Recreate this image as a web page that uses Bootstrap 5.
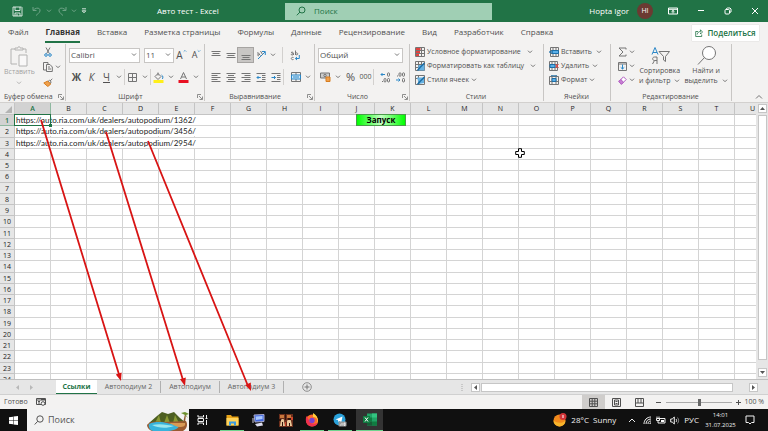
<!DOCTYPE html>
<html lang="ru">
<head>
<meta charset="utf-8">
<meta name="viewport" content="width=device-width, initial-scale=1">
<title>Авто тест - Excel</title>
<link href="https://cdn.jsdelivr.net/npm/bootstrap@5.3.0/dist/css/bootstrap.min.css" rel="stylesheet">
<style>
:root{--xl:#217346;--ink:#505050;--rib:#f3f2f1;--line:#d4d4d4}
body{font-family:"Open Sans","Noto Sans",sans-serif;font-size:7px;line-height:10px;color:var(--ink);background:var(--rib)}
svg{display:block;flex:none;fill:none;stroke:currentColor}
button,select,input{font:inherit;color:inherit}
.tb{border:0;background:none;padding:0;display:flex;align-items:center;justify-content:center;flex:none;white-space:nowrap}
.w10{width:10px}.w12{width:12px}.w15{width:15px}.h14{height:14px}.h16{height:16px}.w27{width:27px}.w28{width:28px}
/* title bar */
.titlebar{height:22px;background:var(--xl);color:#fff;font-size:8px}
.quick{width:157px;padding-left:10px}
.dim{opacity:.35}
.doc{width:128px}
.find{width:207px;height:17px;background:#a0cfb4;color:var(--xl);padding-left:11px}
.find input,.search input{border:0;background:none;outline:0;padding:0;width:100%;min-width:0}
.find input::placeholder{color:var(--xl);opacity:1}
.avatar{width:16px;height:16px;background:#6b3a32;font-size:7px;margin-right:6px}
/* ribbon tabs */
.menu{height:21px;font-size:8px;padding:0 9px 0 8px}
.menu-links{gap:17px}
.menu a{color:var(--ink);text-decoration:none;padding:4px 0 3px;line-height:12px;border-bottom:2px solid transparent;white-space:nowrap}
.menu a.on{font-weight:700;color:#333;border-color:var(--xl)}
.share{height:16px;background:#fff;color:var(--xl);font-weight:600;width:67px;box-shadow:0 0 1px #bbb}
/* ribbon */
.ribbon{height:60px;border-bottom:1px solid #d2d0ce}
.ribbon svg{color:#757575}
.grp{position:relative;flex:none;height:59px}
.grp+.grp::before{content:"";position:absolute;left:0;top:1px;bottom:1px;width:1px;background:#c8c6c4}
.gbody{height:49px;padding-top:2px}
.cap{line-height:10px;height:10px}
.launch{position:absolute;right:1px;bottom:1px}
.g1{width:65px}.g2{width:139px}.g3{width:110px}.g4{width:95px}.g5{width:134px}.g6{width:67px}.g7{width:121px}
.two{display:flex;flex-direction:column;gap:6px;padding-top:4px}
.r16{display:flex;height:16px;align-items:center}
.three{display:flex;flex-direction:column}
.lead6{padding-left:6px}
.combo{appearance:none;border:1px solid #c8c6c4;background:#fff url("data:image/svg+xml,%3Csvg xmlns='http://www.w3.org/2000/svg' width='6' height='4'%3E%3Cpath d='M1 .5L3 2.5L5 .5' fill='none' stroke='%23777'/%3E%3C/svg%3E") no-repeat right 2px center;height:15px;padding:0 1px;border-radius:0;font-size:8px}
.c1{width:71px}.c2{width:30px}.c3{width:85px}
.vr1{width:1px;height:16px;background:#d2d0ce;flex:none}
.picked{background:#c8c6c4;outline:1px solid #a6a4a2;height:14px}
.big{flex-direction:column;justify-content:flex-start;line-height:10px}
.cmd{height:14px;justify-content:flex-start;gap:2px}
.font9{font-size:9px}.font10{font-size:10px}.font11{font-size:11px}
/* sheet */
.work{min-height:0}
.sheet{flex:1 1 0;min-height:0;overflow:hidden}
.cells{flex:1 1 0;min-width:0;overflow:hidden;background:#fff;position:relative}
.book{display:grid;grid-template-rows:12px 270px;line-height:10px;color:#222;width:771px}
.book thead,.book tbody,.book tr{display:grid;min-height:0}
.book tbody{grid-template-rows:repeat(24,minmax(0,1fr))}
.book tr{grid-template-columns:15px repeat(21,36px)}
.book th{background:#e6e6e6;font-weight:400;font-size:7px;text-align:center;border-right:1px solid #c4c4c4;border-bottom:1px solid #c4c4c4;padding:0;min-height:0;overflow:hidden;line-height:11px}
.book td{border-right:1px solid var(--line);border-bottom:1px solid var(--line);padding:0;min-height:0;min-width:0;white-space:nowrap;font-family:Lato,"Open Sans",sans-serif;font-size:8px}
.book th.sel{background:#d2d2d2;color:var(--xl);font-weight:600;border-color:#8fb8a0}
.book td span{position:relative;display:block;width:max-content;background:#fff;height:10px;line-height:10px;padding-left:1px}
.corner{display:block;width:0;height:0;margin:3px 2px 0 5px;border-left:7px solid transparent;border-bottom:7px solid #b4b4b4}
.cursorbox{position:absolute;left:14px;top:11px;width:37px;height:12px;border:1px solid var(--xl)}
.cursorbox::after{content:"";position:absolute;right:-2px;bottom:-2px;width:3px;height:3px;background:var(--xl)}
.run{position:absolute;left:356px;top:11px;width:50px;height:12px;border:1px solid #4a9a4a;padding:0;background:linear-gradient(90deg,#0f0,#c4ffc4 50%,#0f0);color:#000;font-weight:700;font-size:8px;line-height:10px;text-align:center}
.pointer{position:absolute;left:515px;top:45px}
.arrows{position:absolute;left:0;top:0;pointer-events:none;z-index:2}
.vscroll{width:12px;background:#e6e6e6;padding:1px 1px 2px}
.knob{background:#fff;border:1px solid #c6c6c6;width:9px;height:9px;flex:none}
.vthumb{width:9px;flex:1;background:#fff;border:1px solid #c6c6c6;margin:2px 0 8px}
.sheets{height:15px;background:#e6e6e6;border-top:1px solid #c0c0c0}
.sheets a{color:#666;text-decoration:none;line-height:12px;height:12px;margin-top:1px;border-right:1px solid #b0b0b0;text-align:center;white-space:nowrap}
.sheets a.on{background:#fff;color:var(--xl);font-weight:700;border-right:0;border-bottom:1px solid var(--xl);height:14px;line-height:13px;margin-top:0;width:41px}
.s2{width:64px}.s3{width:59px}.s4{width:64px}
.newsheet{margin-left:18px;color:#777}
.navs{width:56px;color:#b4b4b4;padding-left:15px;gap:11px}
.hscroll{width:289px;padding-right:2px}
.hthumb{flex:1;height:9px;background:#fff;border:1px solid #c6c6c6;margin-left:1px;margin-right:16px}
.status{height:15px;border-top:1px solid #d0d0d0;padding-left:4px}
.view{width:23px;height:14px}
.view.on{background:#cfcdcb}
.zoom{appearance:none;width:66px;height:8px;background:linear-gradient(#aaa,#aaa) center/100% 1px no-repeat}
.zoom::-webkit-slider-thumb{appearance:none;width:3px;height:7px;background:#666}
/* taskbar */
.taskbar{height:22px;background:#101010;color:#f0f0f0;font-size:8px}
.search{width:162px;background:#f2f2f2;color:#555;padding-left:7px}
.search input::placeholder{color:#555;opacity:1}
.island{stroke:none}
.app{width:24px;height:22px;padding-bottom:1px}
.open{box-shadow:inset 0 -1px #6fd58f}
.cur{background:#333;width:27px}
.clock{font-size:6px;line-height:10px;width:35px}
.note{width:23px;margin-right:7px}
</style>
</head>
<body class="d-flex flex-column vh-100 overflow-hidden">
<svg width="0" height="0" class="position-absolute" aria-hidden="true">
  <symbol id="chev" viewBox="0 0 6 4"><path d="M1 .7 3 2.7 5 .7"/></symbol>
  <symbol id="launch" viewBox="0 0 6 6"><path d="M.5 4V.5H4M2 2l3 3M5.5 2.500V5.500H2.500" stroke-width=".8"/></symbol>
</svg>

<header class="titlebar d-flex align-items-center">
  <div class="quick d-flex align-items-center">
    <button class="tb w15" aria-label="Сохранить"><svg width="11" height="11" viewBox="0 0 11 11"><path d="M1 1h8.500l.5.5V10H1zM3 1v3.500h5V1M3 10V7h5v3M5 8v2" stroke-width=".8"/></svg></button>
    <button class="tb w15 dim ms-1" aria-label="Отменить"><svg width="10" height="10" viewBox="0 0 10 10"><path d="M1 1v3.500h3.500M1 4.500C4 1 8.500 1.500 8 5 7.500 7 5.500 8 4 9.500"/></svg></button>
    <button class="tb w10 dim" aria-label="Список отмены"><svg width="6" height="4"><use href="#chev"/></svg></button>
    <button class="tb w15 dim" aria-label="Повторить"><svg width="10" height="10" viewBox="0 0 10 10"><path d="M9 1v3.500H5.500M9 4.500C6 1 1.500 1.500 2 5 2.500 7 4.500 8 6 9.500"/></svg></button>
    <button class="tb w10 dim" aria-label="Список повтора"><svg width="6" height="4"><use href="#chev"/></svg></button>
    <button class="tb w10" aria-label="Настройка панели"><svg width="6" height="6" viewBox="0 0 6 6"><path d="M1 .8h4M1.200 2.800h3.600L3 4.800z" stroke-width=".8"/></svg></button>
  </div>
  <div class="doc text-nowrap">Авто тест - Excel</div>
  <label class="find d-flex align-items-center gap-2"><svg width="10" height="10" viewBox="0 0 10 10"><circle cx="6" cy="4" r="3"/><path d="M4 6 .8 9.300"/></svg><input type="text" placeholder="Поиск" aria-label="Поиск"></label>
  <div class="ms-auto d-flex align-items-center">
    <span class="me-2 text-nowrap">Hopta Igor</span>
    <span class="avatar rounded-circle d-flex align-items-center justify-content-center">HI</span>
    <button class="tb w28" aria-label="Параметры ленты"><svg width="10" height="8" viewBox="0 0 10 8"><path d="M.5 1h9v6h-9zM.5 2.300h9M5 6.500V3.500M3.500 4.800 5 3.400l1.500 1.400"/></svg></button>
    <button class="tb w27" aria-label="Свернуть"><svg width="8" height="8" viewBox="0 0 8 8"><path d="M1 3.500h6"/></svg></button>
    <button class="tb w27" aria-label="Восстановить"><svg width="8" height="8" viewBox="0 0 8 8"><rect x="1" y="2.500" width="4.500" height="4.500" rx="1"/><path d="M2.500 2.500V1.500l1-.5H6l1 1v3l-1.500.5"/></svg></button>
    <button class="tb w27" aria-label="Закрыть"><svg width="8" height="8" viewBox="0 0 8 8"><path d="m1 1 6 6M7 1 1 7"/></svg></button>
  </div>
</header>

<nav class="menu d-flex align-items-center">
  <div class="menu-links d-flex">
    <a href="#">Файл</a><a href="#" class="on">Главная</a><a href="#">Вставка</a><a href="#">Разметка страницы</a><a href="#">Формулы</a><a href="#">Данные</a><a href="#">Рецензирование</a><a href="#">Вид</a><a href="#">Разработчик</a><a href="#">Справка</a>
  </div>
  <button class="tb share ms-auto gap-1"><svg width="8" height="8" viewBox="0 0 8 8"><path d="M3 2.500H.7v5h6V5.500M2.200 5.500c.3-2 1.500-3 3.300-3V.8l2 2.200-2 2V3.700"  stroke-width=".8"/></svg>Поделиться</button>
</nav>

<section class="ribbon d-flex" aria-label="Главная">
  <div class="grp g1">
    <div class="gbody d-flex">
      <button class="tb big w-auto ps-1 opacity-50" aria-label="Вставить">
        <svg width="20" height="22" viewBox="0 0 20 22"><path d="M8 19H2V4h4M14 4h3v4M6 5V3h3c0-2 2-2 2 0h3v2z"/><path d="M10 10h8v11h-8z" fill="#fff"/></svg>
        <span>Вставить</span><svg width="6" height="4" class="mt-1"><use href="#chev"/></svg></button>
      <div class="three ps-1 ms-1">
        <button class="tb w10 h14" aria-label="Вырезать"><svg width="8" height="10" viewBox="0 0 8 10"><path d="M2 .5 5.300 6.500M6 .5 2.700 6.500"/><g stroke="#2b88c8"><circle cx="2" cy="8" r="1.300"/><circle cx="6" cy="8" r="1.300"/></g></svg></button>
        <div class="d-flex"><button class="tb w10 h16" aria-label="Копировать"><svg width="10" height="10" viewBox="0 0 10 10"><path d="M3 8H.5V.5H5V2M3.500 2.500H7L9.300 5v4.500H3.500zM5 5h2M5 7h3"/></svg></button><button class="tb w10" aria-label="Параметры копирования"><svg width="6" height="4"><use href="#chev"/></svg></button></div>
        <button class="tb w10 h14" aria-label="Формат по образцу"><svg width="10" height="9" viewBox="0 0 10 9"><path d="m.8 5 4-2 3 3-3 2.500z" fill="#f0a04b" stroke="#d67d20"/><path d="m5 3.500 1.500-1.200 1.700 1.500-1 1.700M7 3 9.300.8"/></svg></button>
      </div>
    </div>
    <div class="cap ps-1">Буфер обмена</div><button class="tb launch" aria-label="Буфер обмена, параметры"><svg width="6" height="8"><use href="#launch"/></svg></button>
  </div>

  <div class="grp g2">
    <div class="gbody two ps-1">
      <div class="r16">
        <select class="combo c1 me-1" aria-label="Шрифт"><option>Calibri</option></select>
        <select class="combo c2" aria-label="Размер"><option>11</option></select>
        <button class="tb w15 font10" aria-label="Увеличить шрифт">A<svg width="4" height="4" viewBox="0 0 6 4" class="mb-2"><path d="m1 3 2-2 2 2" stroke="#2b88c8"/></svg></button>
        <button class="tb w15 font9" aria-label="Уменьшить шрифт">A<svg width="4" height="4" class="mb-2" viewBox="0 0 6 4"><path d="m1 1 2 2 2-2" stroke="#2b88c8"/></svg></button>
      </div>
      <div class="r16">
        <button class="tb w15 font10 fw-bold" aria-label="Полужирный">Ж</button><button class="tb w15 font10 fst-italic" aria-label="Курсив">К</button><button class="tb w15 font10 text-decoration-underline" aria-label="Подчеркнутый">Ч</button><button class="tb w10" aria-label="Подчеркивание"><svg width="6" height="4"><use href="#chev"/></svg></button><i class="vr1"></i>
        <button class="tb w15" aria-label="Границы"><svg width="9" height="9" viewBox="0 0 9 9"><path d="M.5.5h8v8h-8zM4.500.5v8M.5 4.500h8"/></svg></button><button class="tb w10" aria-label="Список границ"><svg width="6" height="4"><use href="#chev"/></svg></button><i class="vr1"></i>
        <button class="tb w15" aria-label="Цвет заливки"><svg width="11" height="11" viewBox="0 0 11 11"><path d="m2 4.500 3-3 3 3-3 3zM5 .5v3"/><path d="M8.500 3c2 1 1.500 3 .8 4" stroke="#2b88c8"/><path d="M.5 8h10v3H.5z" fill="#ffef1a" stroke="none"/></svg></button><button class="tb w10" aria-label="Список цветов заливки"><svg width="6" height="4"><use href="#chev"/></svg></button>
        <button class="tb w15" aria-label="Цвет текста"><svg width="11" height="11" viewBox="0 0 11 11"><path d="m2.500 7 3-6.500 3 6.500M3.500 5h4"/><path d="M.5 8h10v3H.5z" fill="#e81123" stroke="none"/></svg></button><button class="tb w10" aria-label="Список цветов текста"><svg width="6" height="4"><use href="#chev"/></svg></button>
      </div>
    </div>
    <div class="cap text-center pe-2">Шрифт</div><button class="tb launch" aria-label="Шрифт, параметры"><svg width="6" height="8"><use href="#launch"/></svg></button>
  </div>

  <div class="grp g3">
    <div class="gbody two ps-1">
      <div class="r16">
        <button class="tb w15" aria-label="По верхнему краю"><svg width="10" height="10" viewBox="0 0 10 10"><path d="M.5 1.500h9M1.500 3.500h7M.5 5.500h9"/></svg></button>
        <button class="tb w15" aria-label="По середине"><svg width="10" height="10" viewBox="0 0 10 10"><path d="M.5 3.500h9M1.500 5.500h7M.5 7.500h9"/></svg></button>
        <button class="tb w15 picked" aria-label="По нижнему краю"><svg width="10" height="10" viewBox="0 0 10 10"><path d="M.5 5.500h9M1.500 7.500h7M.5 9.500h9"/></svg></button>
        <button class="tb w15" aria-label="Ориентация"><svg width="10" height="10" viewBox="0 0 10 10"><path d="M2 9 9 2M6 1.500h3.300V5" stroke="#2b88c8"/><path d="M1 3.500c1-1.500 2-.5 2 .5L4.500 5.500M3 4c-2 0-1.500 2.500 0 1.500M4.500 1 6.500 4.500"/></svg></button>
        <button class="tb w10" aria-label="Список ориентаций"><svg width="6" height="4"><use href="#chev"/></svg></button>
        <i class="vr1 ms-1"></i>
        <button class="tb w15 ms-1" aria-label="Перенести текст"><svg width="10" height="11" viewBox="0 0 10 11"><path d="M1 2.500c2-1 2.500 0 2.500 2.500M3.500 3.500C1.500 3.500.5 5 2 5s1.500-1 1.500-1M5.500.5V5M5.500 3c3-1 3 3 0 1.500M3.500 7.500c-3-1-3 3 0 2"/><path d="M9.300 5v3.500H5.500M7 7 5.300 8.500 7 10" stroke="#2b88c8"/></svg></button>
      </div>
      <div class="r16">
        <button class="tb w15" aria-label="По левому краю"><svg width="10" height="10" viewBox="0 0 10 10"><path d="M.5 1.500h9M.5 3.500h6M.5 5.500h9M.5 7.500h6M.5 9.500h9"/></svg></button>
        <button class="tb w15" aria-label="По центру"><svg width="10" height="10" viewBox="0 0 10 10"><path d="M.5 1.500h9M2 3.500h6M.5 5.500h9M2 7.500h6M.5 9.500h9"/></svg></button>
        <button class="tb w15" aria-label="По правому краю"><svg width="10" height="10" viewBox="0 0 10 10"><path d="M.5 1.500h9M3.500 3.500h6M.5 5.500h9M3.500 7.500h6M.5 9.500h9"/></svg></button>
        <button class="tb w15" aria-label="Уменьшить отступ"><svg width="10" height="10" viewBox="0 0 10 10"><path d="M.5 1.500h9M6 3.500h3.500M6 5.500h3.500M6 7.500h3.500M.5 9.500h9"/><path d="M4.800 5.500H1M2.500 4 1 5.500 2.500 7" stroke="#2b88c8"/></svg></button>
        <button class="tb w15" aria-label="Увеличить отступ"><svg width="10" height="10" viewBox="0 0 10 10"><path d="M.5 1.500h9M6 3.500h3.500M6 5.500h3.500M6 7.500h3.500M.5 9.500h9"/><path d="M.5 5.500h4M3 4l1.500 1.500L3 7" stroke="#2b88c8"/></svg></button>
        <i class="vr1"></i>
        <button class="tb w15 ms-1" aria-label="Объединить"><svg width="10" height="10" viewBox="0 0 10 10"><path d="M.5.5h9v9h-9zM5 .5v9"/><path d="M.5 3h9v4h-9z" fill="#cfe8f8" stroke="#2b88c8"/><path d="M2 5h6" stroke="#2b88c8"/></svg></button>
        <button class="tb w10" aria-label="Варианты объединения"><svg width="6" height="4"><use href="#chev"/></svg></button>
      </div>
    </div>
    <div class="cap text-center pe-2">Выравнивание</div><button class="tb launch" aria-label="Выравнивание, параметры"><svg width="6" height="8"><use href="#launch"/></svg></button>
  </div>

  <div class="grp g4">
    <div class="gbody two ps-1">
      <div class="r16"><select class="combo c3" aria-label="Числовой формат"><option>Общий</option></select></div>
      <div class="r16">
        <button class="tb w15" aria-label="Финансовый формат"><svg width="11" height="10" viewBox="0 0 11 10"><path d="M.5 1h9v5h-9z" fill="#ccc"/><circle cx="5" cy="3.500" r="1.200"/><path d="M6 5h4v4.500H6z" fill="#f0a04b" stroke="#d67d20"/></svg></button><button class="tb w10" aria-label="Список валют"><svg width="6" height="4"><use href="#chev"/></svg></button>
        <button class="tb w15 font11">%</button><button class="tb w15">000</button><i class="vr1"></i>
        <button class="tb w15 ms-1" aria-label="Увеличить разрядность"><svg width="11" height="11" viewBox="0 0 11 11"><path d="M5 2.500H1M2.500 1 1 2.500 2.500 4" stroke="#2b88c8"/><rect x="7.500" y=".8" width="2" height="3.500" rx="1"/><rect x="4" y="6.500" width="2" height="3.500" rx="1"/><rect x="7.500" y="6.500" width="2" height="3.500" rx="1"/><path d="M2 9.500h1"/></svg></button>
        <button class="tb w15" aria-label="Уменьшить разрядность"><svg width="11" height="11" viewBox="0 0 11 11"><path d="M1 8h4M3.500 6.500 5 8 3.500 9.500" stroke="#2b88c8"/><rect x="4" y=".8" width="2" height="3.500" rx="1"/><rect x="7.500" y=".8" width="2" height="3.500" rx="1"/><rect x="7.500" y="6.500" width="2" height="3.500" rx="1"/><path d="M2 4h1"/></svg></button>
      </div>
    </div>
    <div class="cap text-center pe-2">Число</div><button class="tb launch" aria-label="Число, параметры"><svg width="6" height="8"><use href="#launch"/></svg></button>
  </div>

  <div class="grp g5">
    <div class="gbody three lead6">
      <button class="tb cmd"><svg width="10" height="10" viewBox="0 0 10 10"><path d="M.5.5h9v9h-9zM.5 3.500h9M.5 6.500h9M6.500.5v9"/><path d="M3 1h2.500v2H1V1zM1 4h4v2H1zM1 7h3v2H1z" fill="#e0433f" stroke="none"/></svg>Условное форматирование<svg width="6" height="4" class="ms-1"><use href="#chev"/></svg></button>
      <button class="tb cmd"><svg width="10" height="10" viewBox="0 0 10 10"><path d="M.5.5h9v9h-9zM.5 3.500h9M.5 6.500h9M3.500.5v9M6.500.5v9"/><path d="M3.500 4h6v5.500H3z" fill="#67b2e3" stroke="none"/><path d="M9.500 2 5 6.500 2.500 9.500" stroke="#1d6fa8" stroke-width="1.500"/></svg>Форматировать как таблицу<svg width="6" height="4" class="ms-1"><use href="#chev"/></svg></button>
      <button class="tb cmd"><svg width="10" height="10" viewBox="0 0 10 10"><path d="M.5.5h9v9h-9zM.5 3.500h9M3.500.5v9"/><path d="M2 2.500h7V8L4 9z" fill="#67b2e3" stroke="none"/><path d="M9.500 2 5 6.500 2.500 9.500" stroke="#1d6fa8" stroke-width="1.500"/></svg>Стили ячеек<svg width="6" height="4"><use href="#chev"/></svg></button>
    </div>
    <div class="cap text-center">Стили</div>
  </div>

  <div class="grp g6">
    <div class="gbody three lead6 pe-2">
      <button class="tb cmd"><svg width="10" height="10" viewBox="0 0 10 10"><path d="M1.500.5h8v9h-8zM1.500 3.500h8M1.500 6.500h8M4 .5v9M7 .5v9"/><path d="M3 3.500h6.500v3H3z" fill="#5cb0e8" stroke="#1d6fa8"/><path d="M4 5H.5M2 3.500.5 5 2 6.500" stroke="#1d6fa8"/></svg>Вставить<svg width="6" height="4" class="ms-auto"><use href="#chev"/></svg></button>
      <button class="tb cmd pe-1"><svg width="10" height="10" viewBox="0 0 10 10"><path d="M.5.5h8v9h-8zM.5 3.500h8M.5 6.500h8M3 .5v9M6 .5v9"/><path d="M1 3.500h5v3H1z" fill="#5cb0e8" stroke="#1d6fa8"/><path d="m6.500 3 3 4M9.500 3l-3 4" stroke="#e0433f"/></svg>Удалить<svg width="6" height="4" class="ms-auto"><use href="#chev"/></svg></button>
      <button class="tb cmd"><svg width="10" height="10" viewBox="0 0 10 10"><path d="M.5 1.500h9v8h-9zM.5 6.500h9M3 .5v9M7 .5v9"/><path d="M3 3.500h4v3H3z" fill="#5cb0e8" stroke="#1d6fa8"/><path d="M2 .8h6" stroke="#1d6fa8"/></svg>Формат<svg width="6" height="4"><use href="#chev"/></svg></button>
    </div>
    <div class="cap text-center">Ячейки</div>
  </div>

  <div class="grp g7">
    <div class="gbody d-flex ps-1">
      <div class="three">
        <button class="tb cmd ps-1" aria-label="Автосумма"><svg width="9" height="10" viewBox="0 0 9 10"><path d="M8 2.500V1H1l4 4-4 4h7V7.500"/></svg><svg width="6" height="4"><use href="#chev"/></svg></button>
        <button class="tb cmd ps-1" aria-label="Заполнить"><svg width="9" height="9" viewBox="0 0 9 9"><path d="M.5.5h8v8h-8z"/><path d="M.5 2h8" /><path d="M4.500 2.500v4.500M2.700 5.300 4.500 7l1.800-1.700" stroke="#2b88c8"/></svg><svg width="6" height="4"><use href="#chev"/></svg></button>
        <button class="tb cmd ps-1" aria-label="Очистить"><svg width="9" height="9" viewBox="0 0 9 9"><path d="M.8 5.500 5.500.8l2.700 2.700L3.500 8.200z" fill="#fff" stroke="#b05bc0"/><path d="m.8 5.500 2-2 2.700 2.700-2 2z" fill="#c77fd3" stroke="#b05bc0"/></svg><svg width="6" height="4"><use href="#chev"/></svg></button>
      </div>
      <button class="tb big ms-1"><svg width="20" height="21" viewBox="0 0 20 21"><path d="M2 9.500 5 2.500 8 9.500M3 7.500h4" stroke="#2b88c8"/><path d="M7 19v-7H4.500C2 12 2 15.500 4.500 15.500H7M4.500 15.500 2.500 19"/><path d="M9 6.500h10.500l-4 5v5l-2-1.500v-3.500z"/></svg><span>Сортировка</span><span class="d-flex align-items-center gap-1">и фильтр<svg width="6" height="4"><use href="#chev"/></svg></span></button>
      <button class="tb big ms-1"><svg width="21" height="21" viewBox="0 0 21 21"><circle cx="13" cy="8" r="6.500" fill="#fff"/><path d="M8.500 12.500 2 19.500"/></svg><span>Найти и</span><span class="d-flex align-items-center">выделить<svg width="6" height="4" class="ms-1"><use href="#chev"/></svg></span></button>
    </div>
    <div class="cap text-center">Редактирование</div>
  </div>
  <div class="grp flex-grow-1"><button class="tb launch me-1" aria-label="Свернуть ленту"><svg width="8" height="8" viewBox="0 0 8 8"><path d="m1 5.500 3-3 3 3"/></svg></button></div>
</section>

<main class="work flex-grow-1 d-flex flex-column position-relative">
  <div class="sheet d-flex">
    <div class="cells">
      <table class="book"><thead></thead><tbody></tbody></table>
      <div class="cursorbox"></div>
      <button class="run">Запуск</button>
      <svg class="pointer" width="10" height="10" viewBox="0 0 10 10"><path d="M3.500.7h3v2.800h2.800v3H6.500v2.800h-3V6.500H.7v-3h2.800z" fill="#fff" stroke="#000"/></svg>
    </div>
    <div class="vscroll d-flex flex-column align-items-center">
      <button class="tb knob" aria-label="Вверх"><svg width="5" height="3" viewBox="0 0 5 3"><path d="M0 3h5L2.500 0z" fill="#555" stroke="none"/></svg></button>
      <div class="vthumb"></div>
      <button class="tb knob" aria-label="Вниз"><svg width="5" height="3" viewBox="0 0 5 3"><path d="M0 0h5L2.500 3z" fill="#555" stroke="none"/></svg></button>
    </div>
  </div>
  <nav class="sheets d-flex align-items-start">
    <div class="navs d-flex align-self-center"><svg width="4" height="5" viewBox="0 0 4 5"><path d="M4 0v5L1 2.500z" fill="#b8b8b8" stroke="none"/></svg><svg width="4" height="5" viewBox="0 0 4 5"><path d="M0 0v5l3-2.500z" fill="#b8b8b8" stroke="none"/></svg></div>
    <a href="#" class="on">Ссылки</a><a href="#" class="s2">Автоподиум 2</a><a href="#" class="s3">Автоподиум</a><a href="#" class="s4">Автоподиум 3</a>
    <button class="tb align-self-center newsheet" aria-label="Новый лист"><svg width="10" height="10" viewBox="0 0 10 10"><circle cx="5" cy="5" r="4.300" stroke-width=".8"/><path d="M5 2.500v5M2.500 5h5"/></svg></button>
    <svg class="ms-auto me-2 align-self-center" width="2" height="7" viewBox="0 0 2 7"><path d="M1 0v7" stroke="#aaa" stroke-dasharray="1 1"/></svg>
    <div class="hscroll d-flex align-items-center align-self-center me-2">
      <button class="tb knob" aria-label="Влево"><svg width="3" height="5" viewBox="0 0 3 5"><path d="M3 0v5L0 2.500z" fill="#555" stroke="none"/></svg></button>
      <div class="hthumb"></div>
      <button class="tb knob" aria-label="Вправо"><svg width="3" height="5" viewBox="0 0 3 5"><path d="M0 0v5l3-2.500z" fill="#555" stroke="none"/></svg></button>
    </div>
  </nav>
  <svg class="arrows" width="300" height="291" viewBox="0 103 300 291" stroke-width="1.800">
    <g stroke="#d81414" fill="#d81414">
      <path d="M41 120 119.500 376M106 132 183 380M148 141 248 386"/>
      <path d="m121 381-5.200-6.600 5.800-1.800zM185 386l-5-6.800 5.800-1.700zM251 391l-5.700-6 5.500-2.400z" stroke="none"/>
    </g>
  </svg>
</main>

<footer class="status d-flex align-items-center">
  <span>Готово</span>
  <button class="tb ms-2" aria-label="Запись макроса"><svg width="10" height="8" viewBox="0 0 10 8"><path d="M.5.5h9v6h-9zM.5 2h9M2 3.500h2M2 5h2M5 1.500h4"/><circle cx="7" cy="5.500" r="1.800" fill="#fff"/></svg></button>
  <div class="d-flex align-items-center ms-auto">
    <button class="tb view on" aria-label="Обычный"><svg width="9" height="9" viewBox="0 0 9 9"><path d="M.5.5h8v8h-8zM.5 3.200h8M.5 5.800h8M3.200.5v8M5.800.5v8"/></svg></button>
    <button class="tb view" aria-label="Разметка страницы"><svg width="9" height="9" viewBox="0 0 9 9"><path d="M.5.5h8v8h-8zM2.500 2h4v5h-4zM3.500 3.500h2M3.500 5.500h2"/></svg></button>
    <button class="tb view" aria-label="Страничный режим"><svg width="9" height="9" viewBox="0 0 9 9"><path d="M.5.5h8v8h-8zM3 .5V5M6 .5V5M.5 5h8"/></svg></button>
    <button class="tb w15" aria-label="Уменьшить"><svg width="5" height="5" viewBox="0 0 5 5"><path d="M0 2.500h5"/></svg></button>
    <input class="zoom" type="range" aria-label="Масштаб" min="0" max="100" value="50">
    <button class="tb w12" aria-label="Увеличить"><svg width="5" height="5" viewBox="0 0 5 5"><path d="M0 2.500h5M2.500 0v5"/></svg></button>
    <span class="me-1 text-nowrap">100 %</span>
  </div>
</footer>

<footer class="taskbar d-flex align-items-center">
  <button class="tb w27" aria-label="Пуск"><svg width="9" height="9" viewBox="0 0 9 9"><path d="M0 1.300 4 .7v3.600H0zM4.500.6 9 0v4.300H4.500zM0 4.700h4v3.600L0 7.700zM4.500 4.700H9V9l-4.500-.6z" fill="#fff" stroke="none"/></svg></button>
  <label class="search d-flex align-items-center align-self-stretch"><svg width="10" height="10" viewBox="0 0 10 10"><circle cx="6" cy="4" r="3.200"/><path d="M3.700 6.300.7 9.500"/></svg><input type="text" class="ms-1 font9" placeholder="Поиск" aria-label="Поиск в Windows">
    <svg width="42" height="20" viewBox="0 0 42 20" class="align-self-end island"><path d="M2 12 10 5l5-4 6 2 6-2 6 6 6 5z" fill="#4d5f22"/><path d="m8 12 4-8 2 8zM17 12l3-8 3 8zM26 12l2-8 4 8z" fill="#8a9a35"/><path d="M0 14c2-4 10-4 18-3l21-1c2 3 1 8-3 10H5c-3-1-5-4-5-6z" fill="#9a5a30"/><path d="M2 13c6-3 14-2 18-1 5 2 12 0 12 3s-8 5-12 5H6c-3-1-5-4-4-7z" fill="#37b3dc"/><path d="M5 14c8-2 16 0 22 1-8 3-16 2-22-1z" fill="#9ce6ee"/><path d="M22 12h16c1 3-2 4-5 4-4 0-6-2-11-4z" fill="#d79a55"/><path d="M36 12 38 3h1l-1 9z" fill="#8a5a2e"/><path d="m38 4-4-2 4-1 4 2-3 1 2 3z" fill="#6b8f2b"/></svg></label>
  <button class="tb w27" aria-label="Представление задач"><svg width="11" height="10" viewBox="0 0 11 10" stroke="#bbb"><path d="M1 0v2h5.500V0M1 10V8h5.500v2M1 3.500h5.500v3H1zM9.500 0v3M9.500 5v5M8.500 3.500h2"/></svg></button>
  <button class="tb app open ms-1" aria-label="Проводник"><svg width="13" height="12" viewBox="0 0 13 12"><path d="M.5 1h4.500l1 1.500h6.500v9H.5z" fill="#e8a317" stroke="none"/><path d="M.5 4h12v7.500H.5z" fill="#ffd45c" stroke="none"/><path d="M3 7.500h7v4H8V9.500H5v2H3z" fill="#3b9be0" stroke="none"/></svg></button>
  <button class="tb w28" aria-label="Удалённый доступ"><svg width="13" height="13" viewBox="0 0 13 13"><path d="m2 1 10-.5v7L3 8z" fill="#4169e1" stroke="#aac"/><path d="m3.500 2.500 7-.5v3l-6.500 1z" fill="#a9c8ff" stroke="none"/><path d="m3 10 7-1.500 1 3-6 1z" fill="#dde" stroke="none"/><path d="M1 4v5" stroke="#ccd"/></svg></button>
  <button class="tb w28" aria-label="Игра"><svg width="14" height="13" viewBox="0 0 14 13" ><path d="M0 0h14v13H0z" fill="#6b2f1c" stroke="none"/><path d="M1 1h4v3H1zM8 1h4v3H8z" fill="#c9783c" stroke="none"/><path d="M2 6c1-2 4-1 3 1l1 5H1zM8 7c1-2 4-2 4 0l1 5H8z" fill="#eac99a" stroke="none"/><path d="M6 0h1v6H6zM0 5h2v2H0zM9 4h3v2H9zM10 9h1v3h-1zM3 8h1v4H3z" fill="#30140c" stroke="none"/><path d="M6 8h1v4H6zM12 3h2v3h-2z" fill="#d1452b" stroke="none"/></svg></button>
  <button class="tb app open" aria-label="Firefox"><svg width="14" height="14" viewBox="0 0 14 14"><circle cx="7" cy="7.500" r="6" fill="#ff6a2b" stroke="none"/><path d="M8 0c5 3 6.500 8 3 11.500C14 6 11 4 8 4z" fill="#ffcf3a" stroke="none"/><path d="M1.500 3C-.5 8 2 13.500 7 13.500c3 0 5-1.500 6-4-3 2-8 2-9-2z" fill="#f0304e" stroke="none"/><circle cx="7" cy="7.500" r="2.700" fill="#7b3fd0" stroke="none"/></svg></button>
  <button class="tb app open ms-1" aria-label="Telegram"><svg width="14" height="14" viewBox="0 0 14 14"><circle cx="6.500" cy="6.500" r="6" fill="#2aa1da" stroke="none"/><path d="m2.500 6.500 7-3-1.200 6-2-1.500-1 1-.3-2z" fill="#fff" stroke="none"/><rect x="5.500" y="8.500" width="8" height="5" rx="1" fill="#999" stroke="none"/><path d="M7 12h1M9 10v2.500M11 10h1v2.500h-1z" stroke="#fff" stroke-width=".7"/></svg></button>
  <button class="tb app open cur ms-1" aria-label="Excel"><svg width="14" height="13" viewBox="0 0 14 13"><path d="M4 .5h10v12H4z" fill="#21a366" stroke="none"/><path d="M9 .5h5v4H9z" fill="#33c481" stroke="none"/><path d="M4 4.500h5v4H4zM9 8.500h5v4H9z" fill="#107c41" stroke="none"/><path d="M4 8.500h5v4H4z" fill="#185c37" stroke="none"/><path d="M0 3h7v7H0z" fill="#107c41" stroke="none"/><path d="m2 4.500 3 4M5 4.500l-3 4" stroke="#fff"/></svg></button>
  <div class="ms-auto d-flex align-items-center text-nowrap">
    <svg width="14" height="14" viewBox="0 0 14 14"><circle cx="6.500" cy="7.500" r="6" fill="#f28a1c" stroke="none"/><path d="M.5 7.500a6 6 0 0 0 12 0C9 11 4 10 .5 7.500z" fill="#f7b52b" stroke="none"/><circle cx="10" cy="3.500" r="3.500" fill="#d13438" stroke="none"/><path d="M10 2v3" stroke="#fff"/></svg>
    <span class="ms-1">28°C &nbsp;Sunny</span>
    <button class="tb w15 ms-2" aria-label="Скрытые значки"><svg width="8" height="5" viewBox="0 0 8 5"><path d="m1 4 3-3 3 3"/></svg></button>
    <svg class="ms-1" width="9" height="9" viewBox="0 0 9 9" stroke="#ccc"><path d="M1 8C1 4 4 1 8 1M3 8c0-3 2-5 5-5M5 8c0-2 1-3 3-3M7 8V7h1"/></svg>
    <svg class="ms-1" width="10" height="9" viewBox="0 0 10 9"><path d="M3 2.500h6v4.500H2V5M1 .5v2M3 .5v2M.5 2.500h3v2h-3z"/><path d="M5 4h3v2H5z" fill="#fff" stroke="none"/></svg>
    <svg class="ms-1" width="10" height="9" viewBox="0 0 10 9"><path d="M.7 3h1.500L4.300 1v7L2.200 6H.7zM6 3c.8 1 .8 2 0 3"/><path d="M7.500 1.500c1.500 2 1.500 4 0 6" opacity=".5"/></svg>
    <span class="ms-1 me-1">РУС</span>
    <time class="clock text-center">14:01<br>31.07.2025</time>
    <button class="tb note" aria-label="Уведомления"><svg width="10" height="10" viewBox="0 0 10 10"><path d="M1 1h8v6.500H6.500L5 9 3.500 7.500H1z"/></svg></button>
  </div>
</footer>

<script src="https://cdn.jsdelivr.net/npm/bootstrap@5.3.0/dist/js/bootstrap.bundle.min.js"></script>
<script>
const cols = [...'ABCDEFGHIJKLMNOPQRSTU'];
const links = ['1362', '3456', '2954'].map(id => `https://auto.ria.com/uk/dealers/autopodium/${id}/`);
document.querySelector('.book thead').innerHTML =
  `<tr><th><i class="corner"></i></th>${cols.map((c, i) => `<th scope="col"${i ? '' : ' class="sel"'}>${c}</th>`).join('')}</tr>`;
document.querySelector('.book tbody').innerHTML = Array.from({length: 24}, (_, r) =>
  `<tr><th scope="row"${r ? '' : ' class="sel"'}>${r + 1}</th>${cols.map((c, i) => `<td>${!i && links[r] ? `<span>${links[r]}</span>` : ''}</td>`).join('')}</tr>`).join('');
</script>
</body>
</html>
